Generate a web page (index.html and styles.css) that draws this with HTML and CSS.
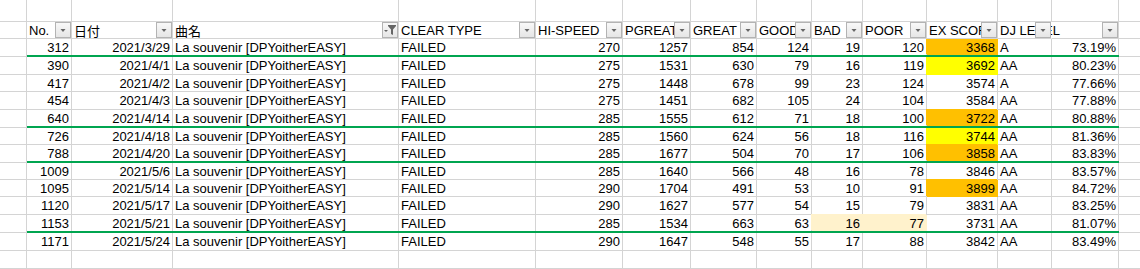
FILE: index.html
```html
<!DOCTYPE html>
<html lang="ja">
<head>
<meta charset="utf-8">
<title>Sheet</title>
<link rel="stylesheet" href="styles.css">
</head>
<body>
<div class="sheet">
  <div class="row h22">
    <div class="c ca"></div>
    <div class="rec"><div class="c"></div><div class="c"></div><div class="c"></div><div class="c"></div><div class="c"></div><div class="c"></div><div class="c"></div><div class="c"></div><div class="c"></div><div class="c"></div><div class="c"></div><div class="c"></div><div class="c"></div></div>
    <div class="c co"></div>
  </div>
  <div class="row h17 head">
    <div class="c ca"></div>
    <div class="rec">
      <div class="c"><span>No.</span><i class="fb"><svg viewBox="0 0 14 14"><polygon points="4.5,6 9.5,6 7,9" /></svg></i></div>
      <div class="c"><span>日付</span><i class="fb"><svg viewBox="0 0 14 14"><polygon points="4.5,6 9.5,6 7,9" /></svg></i></div>
      <div class="c"><span>曲名</span><i class="fb"><svg viewBox="0 0 14 14"><polygon points="1,7 5,7 3,9" /><path d="M5 2 H13 V3 L10 6.5 V12 L8 11 V6.5 L5 3 Z" /></svg></i></div>
      <div class="c"><span>CLEAR TYPE</span><i class="fb"><svg viewBox="0 0 14 14"><polygon points="4.5,6 9.5,6 7,9" /></svg></i></div>
      <div class="c"><span>HI-SPEED</span><i class="fb"><svg viewBox="0 0 14 14"><polygon points="4.5,6 9.5,6 7,9" /></svg></i></div>
      <div class="c"><span>PGREAT</span><i class="fb"><svg viewBox="0 0 14 14"><polygon points="4.5,6 9.5,6 7,9" /></svg></i></div>
      <div class="c"><span>GREAT</span><i class="fb"><svg viewBox="0 0 14 14"><polygon points="4.5,6 9.5,6 7,9" /></svg></i></div>
      <div class="c"><span>GOOD</span><i class="fb"><svg viewBox="0 0 14 14"><polygon points="4.5,6 9.5,6 7,9" /></svg></i></div>
      <div class="c"><span>BAD</span><i class="fb"><svg viewBox="0 0 14 14"><polygon points="4.5,6 9.5,6 7,9" /></svg></i></div>
      <div class="c"><span>POOR</span><i class="fb"><svg viewBox="0 0 14 14"><polygon points="4.5,6 9.5,6 7,9" /></svg></i></div>
      <div class="c"><span>EX SCORE</span><i class="fb"><svg viewBox="0 0 14 14"><polygon points="4.5,6 9.5,6 7,9" /></svg></i></div>
      <div class="c over"><span>DJ LEVEL</span><i class="fb"><svg viewBox="0 0 14 14"><polygon points="4.5,6 9.5,6 7,9" /></svg></i></div>
      <div class="c"><span></span><i class="fb"><svg viewBox="0 0 14 14"><polygon points="4.5,6 9.5,6 7,9" /></svg></i></div>
    </div>
    <div class="c co"></div>
  </div>

  <div class="row h18 sep">
    <div class="c ca"></div>
    <div class="rec">
      <div class="c n">312</div><div class="c n">2021/3/29</div><div class="c">La souvenir [DPYoitherEASY]</div><div class="c">FAILED</div><div class="c n">270</div><div class="c n">1257</div><div class="c n">854</div><div class="c n">124</div><div class="c n">19</div><div class="c n">120</div><div class="c n fo">3368</div><div class="c">A</div><div class="c n">73.19%</div>
    </div>
    <div class="c co"></div>
  </div>
  <div class="row h18">
    <div class="c ca"></div>
    <div class="rec">
      <div class="c n">390</div><div class="c n">2021/4/1</div><div class="c">La souvenir [DPYoitherEASY]</div><div class="c">FAILED</div><div class="c n">275</div><div class="c n">1531</div><div class="c n">630</div><div class="c n">79</div><div class="c n">16</div><div class="c n">119</div><div class="c n fy nt">3692</div><div class="c">AA</div><div class="c n">80.23%</div>
    </div>
    <div class="c co"></div>
  </div>
  <div class="row h17">
    <div class="c ca"></div>
    <div class="rec">
      <div class="c n">417</div><div class="c n">2021/4/2</div><div class="c">La souvenir [DPYoitherEASY]</div><div class="c">FAILED</div><div class="c n">275</div><div class="c n">1448</div><div class="c n">678</div><div class="c n">99</div><div class="c n">23</div><div class="c n">124</div><div class="c n">3574</div><div class="c">A</div><div class="c n">77.66%</div>
    </div>
    <div class="c co"></div>
  </div>
  <div class="row h18">
    <div class="c ca"></div>
    <div class="rec">
      <div class="c n">454</div><div class="c n">2021/4/3</div><div class="c">La souvenir [DPYoitherEASY]</div><div class="c">FAILED</div><div class="c n">275</div><div class="c n">1451</div><div class="c n">682</div><div class="c n">105</div><div class="c n">24</div><div class="c n">104</div><div class="c n">3584</div><div class="c">AA</div><div class="c n">77.88%</div>
    </div>
    <div class="c co"></div>
  </div>
  <div class="row h18 sep">
    <div class="c ca"></div>
    <div class="rec">
      <div class="c n">640</div><div class="c n">2021/4/14</div><div class="c">La souvenir [DPYoitherEASY]</div><div class="c">FAILED</div><div class="c n">285</div><div class="c n">1555</div><div class="c n">612</div><div class="c n">71</div><div class="c n">18</div><div class="c n">100</div><div class="c n fo">3722</div><div class="c">AA</div><div class="c n">80.88%</div>
    </div>
    <div class="c co"></div>
  </div>
  <div class="row h17">
    <div class="c ca"></div>
    <div class="rec">
      <div class="c n">726</div><div class="c n">2021/4/18</div><div class="c">La souvenir [DPYoitherEASY]</div><div class="c">FAILED</div><div class="c n">285</div><div class="c n">1560</div><div class="c n">624</div><div class="c n">56</div><div class="c n">18</div><div class="c n">116</div><div class="c n fy nt">3744</div><div class="c">AA</div><div class="c n">81.36%</div>
    </div>
    <div class="c co"></div>
  </div>
  <div class="row h18 sep">
    <div class="c ca"></div>
    <div class="rec">
      <div class="c n">788</div><div class="c n">2021/4/20</div><div class="c">La souvenir [DPYoitherEASY]</div><div class="c">FAILED</div><div class="c n">285</div><div class="c n">1677</div><div class="c n">504</div><div class="c n">70</div><div class="c n">17</div><div class="c n">106</div><div class="c n fo">3858</div><div class="c">AA</div><div class="c n">83.83%</div>
    </div>
    <div class="c co"></div>
  </div>
  <div class="row h17">
    <div class="c ca"></div>
    <div class="rec">
      <div class="c n">1009</div><div class="c n">2021/5/6</div><div class="c">La souvenir [DPYoitherEASY]</div><div class="c">FAILED</div><div class="c n">285</div><div class="c n">1640</div><div class="c n">566</div><div class="c n">48</div><div class="c n">16</div><div class="c n">78</div><div class="c n">3846</div><div class="c">AA</div><div class="c n">83.57%</div>
    </div>
    <div class="c co"></div>
  </div>
  <div class="row h17">
    <div class="c ca"></div>
    <div class="rec">
      <div class="c n">1095</div><div class="c n">2021/5/14</div><div class="c">La souvenir [DPYoitherEASY]</div><div class="c">FAILED</div><div class="c n">290</div><div class="c n">1704</div><div class="c n">491</div><div class="c n">53</div><div class="c n">10</div><div class="c n">91</div><div class="c n fo">3899</div><div class="c">AA</div><div class="c n">84.72%</div>
    </div>
    <div class="c co"></div>
  </div>
  <div class="row h18">
    <div class="c ca"></div>
    <div class="rec">
      <div class="c n">1120</div><div class="c n">2021/5/17</div><div class="c">La souvenir [DPYoitherEASY]</div><div class="c">FAILED</div><div class="c n">290</div><div class="c n">1627</div><div class="c n">577</div><div class="c n">54</div><div class="c n">15</div><div class="c n">79</div><div class="c n">3831</div><div class="c">AA</div><div class="c n">83.25%</div>
    </div>
    <div class="c co"></div>
  </div>
  <div class="row h18 sep">
    <div class="c ca"></div>
    <div class="rec">
      <div class="c n">1153</div><div class="c n">2021/5/21</div><div class="c">La souvenir [DPYoitherEASY]</div><div class="c">FAILED</div><div class="c n">285</div><div class="c n">1534</div><div class="c n">663</div><div class="c n">63</div><div class="c n fc">16</div><div class="c n fc">77</div><div class="c n">3731</div><div class="c">AA</div><div class="c n">81.07%</div>
    </div>
    <div class="c co"></div>
  </div>
  <div class="row h18">
    <div class="c ca"></div>
    <div class="rec">
      <div class="c n">1171</div><div class="c n">2021/5/24</div><div class="c">La souvenir [DPYoitherEASY]</div><div class="c">FAILED</div><div class="c n">290</div><div class="c n">1647</div><div class="c n">548</div><div class="c n">55</div><div class="c n">17</div><div class="c n">88</div><div class="c n">3842</div><div class="c">AA</div><div class="c n">83.49%</div>
    </div>
    <div class="c co"></div>
  </div>
  <div class="row h18">
    <div class="c ca"></div>
    <div class="rec"><div class="c"></div><div class="c"></div><div class="c"></div><div class="c"></div><div class="c"></div><div class="c"></div><div class="c"></div><div class="c"></div><div class="c"></div><div class="c"></div><div class="c"></div><div class="c"></div><div class="c"></div></div>
    <div class="c co"></div>
  </div>
</div>
</body>
</html>
```

FILE: styles.css
```css
html, body {
  margin: 0;
  padding: 0;
  background: #ffffff;
}

.sheet {
  width: 1140px;
  height: 269px;
  overflow: hidden;
  font-family: "Liberation Sans", "Noto Sans CJK JP", sans-serif;
  font-size: 13px;
  color: #000000;
}

.row {
  display: flex;
}

.h22 { height: 22px; }
.h17 { height: 17px; }
.h18 { height: 18px; }

.c {
  box-sizing: border-box;
  border-right: 1px solid #d4d4d4;
  border-bottom: 1px solid #d4d4d4;
  padding: 0 2px;
  white-space: nowrap;
  overflow: hidden;
  display: flex;
  align-items: center;
  min-width: 0;
}

.ca {
  width: 27px;
  flex: none;
}

.co {
  width: 21px;
  flex: none;
  border-right: 0;
}

.rec {
  box-sizing: border-box;
  width: 1092px;
  flex: none;
  display: grid;
  grid-template-columns: 45px 101px 226px 137px 87px 68px 66px 55px 51px 64px 71px 54px 67px;
}

.sep .rec {
  border-bottom: 2px solid #00a550;
}

.sep .rec .c {
  border-bottom: 0;
}

.n {
  justify-content: flex-end;
}

/* header */
.head .rec .c {
  position: relative;
}

.head .over {
  overflow: visible;
  border-right-color: transparent;
}

.fb {
  position: absolute;
  right: 0;
  top: 0;
  width: 16px;
  height: 16px;
  box-sizing: border-box;
  border: 1px solid #b3b3b3;
  background: linear-gradient(#f8f8f8, #e6e6e6);
  display: block;
}

.fb svg {
  display: block;
  width: 14px;
  height: 14px;
  fill: #666666;
}

/* fills */
.fo {
  background: #ffc000;
  border-color: #ffc000;
  box-shadow: -1px -1px 0 #ffc000;
}

.fy {
  background: #ffff00;
  border-color: #ffff00;
  box-shadow: -1px -1px 0 #ffff00;
}

.fc {
  background: #fff2cc;
  border-color: #fff2cc;
  box-shadow: -1px -1px 0 #fff2cc;
}

.fy.nt {
  box-shadow: -1px 0 0 #ffff00;
}
```
